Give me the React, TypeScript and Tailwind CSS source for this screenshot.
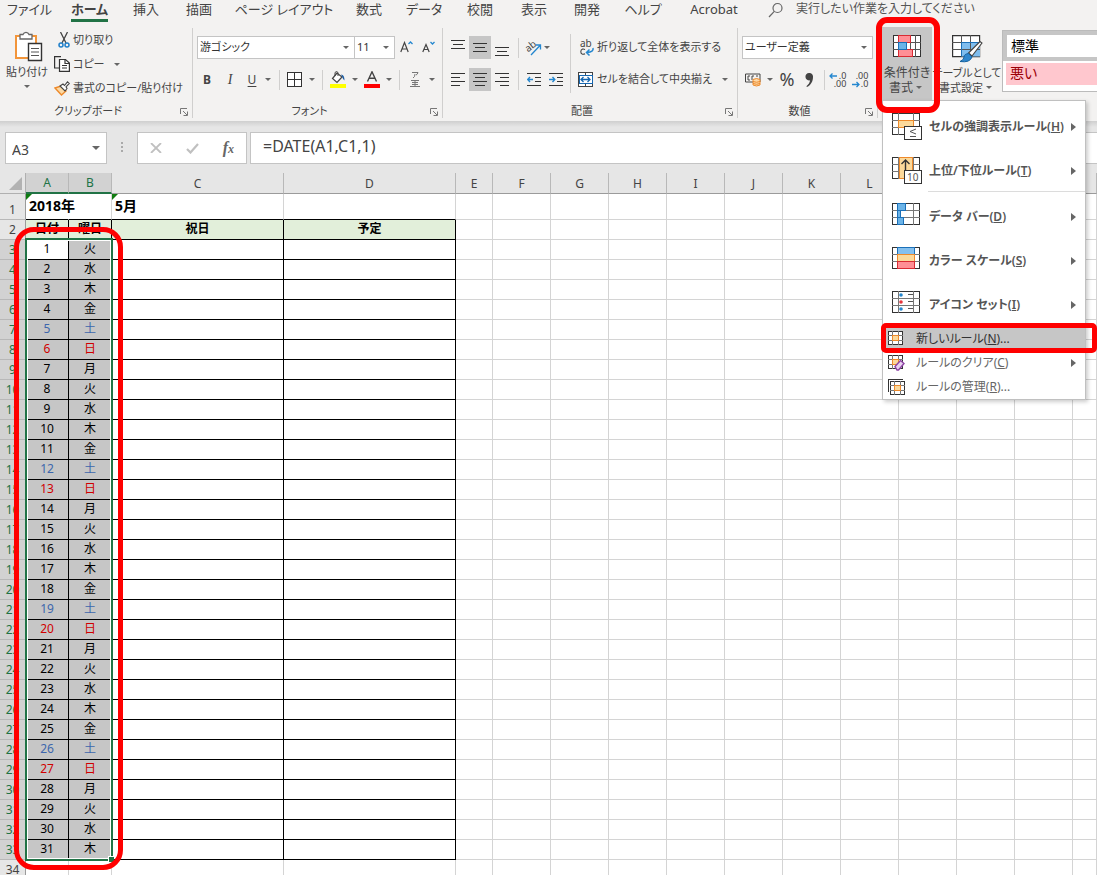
import React from "react";

const UI = "font-['Noto_Sans','Noto_Sans_CJK_JP',sans-serif] [font-feature-settings:'palt']";

/* ---------- small shared pieces ---------- */

function Caret({ className = "w-3" }: { className?: string }) {
  return (
    <span className={`flex shrink-0 items-center justify-center ${className}`}>
      <svg width="6" height="3" viewBox="0 0 6 3" fill="#666"><path d="M0 0h6L3 3z" /></svg>
    </span>
  );
}

function Sep({ className = "w-2" }: { className?: string }) {
  return (
    <span className={`flex h-5 shrink-0 justify-center ${className}`}>
      <span className="w-px bg-[#d0cfce]" />
    </span>
  );
}

function Tool({ label, className = "w-[22px]", pressed, children }: { label: string; className?: string; pressed?: boolean; children: React.ReactNode }) {
  return (
    <button aria-label={label} aria-pressed={pressed} className={`flex h-[23px] shrink-0 items-center justify-center ${pressed ? "bg-[#c6c6c6]" : ""} ${className}`}>
      {children}
    </button>
  );
}

function Group({ title, className, launcher, children }: { title: string; className: string; launcher?: boolean; children: React.ReactNode }) {
  return (
    <section aria-label={title} className={`flex shrink-0 flex-col pt-1.5 ${className}`}>
      <div className="flex h-[90px] flex-col border-r border-[#d0cfce]">
        <div className="h-[75px]">{children}</div>
        <div className="flex h-[15px] items-end pr-1">
          <span className="flex-1 pr-3 text-center text-[11px] leading-[14px]">{title}</span>
          {launcher && (
            <button aria-label={`${title}の設定`} className="-ml-2 pb-0.5">
              <svg width="8" height="8" viewBox="0 0 8 8" fill="none" stroke="#777"><path d="M.5 6V.5H7M3 3l4 4M7.5 3.500v4h-4" /></svg>
            </button>
          )}
        </div>
      </div>
    </section>
  );
}

function Drop({ label, value, className }: { label: string; value: string; className: string }) {
  return (
    <label className={`relative flex h-[23px] items-center border border-[#c4c4c4] bg-white ${className}`}>
      <select aria-label={label} className="h-full w-full appearance-none bg-transparent pl-0.5 text-[#333] outline-none">
        <option>{value}</option>
      </select>
      <span className="pointer-events-none absolute right-1"><Caret className="w-2" /></span>
    </label>
  );
}

function Lines({ rows }: { rows: [number, number, number][] }) {
  return (
    <svg width="14" height="16" viewBox="0 0 14 16" stroke="#333" shapeRendering="crispEdges">
      {rows.map(([x1, x2, y]) => <path key={y} d={`M${x1} ${y + 0.5}H${x2}`} />)}
    </svg>
  );
}

/* ---------- ribbon icons ---------- */

const PasteIcon = () => (
  <svg width="28" height="31" viewBox="0 0 28 31" fill="none">
    <path d="M1 5h20v22H1z" fill="#fff" stroke="#f2953a" strokeWidth="2" />
    <path d="M5 3.500h3a3.200 3.200 0 0 1 6 0h3V8H5z" fill="#fff" stroke="#666" strokeWidth="1.300" />
    <path d="M13.500 12.500h13v17h-13z" fill="#fff" stroke="#333" strokeWidth="1.400" />
    <path d="M16 17.500h8M16 21h8M16 24.500h8" stroke="#555" />
  </svg>
);
const CutIcon = () => (
  <svg width="12" height="16" viewBox="0 0 12 16" fill="none">
    <path d="M2.500 0l5.500 11M9.500 0L4 11" stroke="#444" strokeWidth="1.300" />
    <circle cx="3" cy="13" r="2" stroke="#1f7fc9" strokeWidth="1.500" /><circle cx="9" cy="13" r="2" stroke="#1f7fc9" strokeWidth="1.500" />
  </svg>
);
const CopyIcon = () => (
  <svg width="16" height="16" viewBox="0 0 16 16" fill="none" stroke="#333" strokeWidth="1.200">
    <path d="M5 12H.6V.6H7" /><path d="M5.500 3.500h6L15.400 7v8.400H5.500z" fill="#fff" /><path d="M11 3.500V7.500h4M8 9.500h5M8 12h5" />
  </svg>
);
const BrushIcon = () => (
  <svg width="16" height="15" viewBox="0 0 16 15" fill="none">
    <path d="M1 7l6-2 5 5-4.500 4z" fill="#fbd9a5" stroke="#ee8a2b" strokeWidth="1.400" />
    <path d="M6 5l3-2 1.500 1.500L13.500.8 15.300 2.500 12 5.800 13 7.500l-2 2.500z" fill="#fff" stroke="#444" strokeWidth="1.100" />
  </svg>
);
const FillIcon = () => (
  <svg width="16" height="17" viewBox="0 0 16 17" fill="none">
    <path d="M7 2L2.500 7.500 7 11.500l5-5.500z" fill="#fff" stroke="#444" strokeWidth="1.200" /><path d="M5 5V1.500q1.500-2 3 0V5" stroke="#444" />
    <path d="M11 3.500q3.500 0 3.500 6-2-2-2.500-4z" fill="#1f5fa5" /><path d="M0 13h16v4H0z" fill="#ff0" />
  </svg>
);
const FontColorIcon = () => (
  <svg width="16" height="17" viewBox="0 0 16 17" fill="none">
    <path d="M3.500 10.500L8 .8l4.500 9.700M5.200 7.300h5.600" stroke="#444" strokeWidth="1.400" /><path d="M0 13h16v4H0z" fill="red" />
  </svg>
);
const RubyIcon = () => (
  <svg width="10" height="17" viewBox="0 0 10 17" fill="none" stroke="#777">
    <path d="M2 1.500h6q-.5 2-2 2.500M5 3q0 3-2 4M1 9.500h8M2 11.500h6M2 13.500h6M0 15.500h10M5 9v6" />
  </svg>
);
const OrientationIcon = () => (
  <svg width="17" height="16" viewBox="0 0 17 16" fill="none" className="overflow-visible">
    <text x="0" y="10" transform="rotate(-38 5 7)" fontSize="10" fill="#444" fontFamily="Noto Sans">ab</text>
    <path d="M6 15L15.500 5M11 5h4.500v4.500" stroke="#2487cf" strokeWidth="1.300" />
  </svg>
);
const Indent = ({ out }: { out?: boolean }) => (
  <svg width="14" height="14" viewBox="0 0 14 14" fill="none">
    <path d="M0 .5h14M8 4.500h6M8 8.500h6M0 12.500h14" stroke="#333" shapeRendering="crispEdges" />
    <path d={out ? "M6 6.500H1M3 4L.7 6.500 3 9" : "M0 6.500h5M3.500 4l2.300 2.500L3.500 9"} stroke="#2487cf" strokeWidth="1.400" />
  </svg>
);
const WrapIcon = () => (
  <svg width="15" height="17" viewBox="0 0 15 17" fill="none" className="overflow-visible">
    <text x="0" y="8" fontSize="10" fill="#444" fontFamily="Noto Sans">ab</text>
    <path d="M5 10.600q-1.200-.8-2.500-.5Q.8 10.700.8 12.700t1.700 2.500q1.300.2 2.500-.5" stroke="#444" strokeWidth="1.100" />
    <path d="M13 9q1 4-6 4.500M9.500 10.500L6.500 13.500l3 3" stroke="#2487cf" strokeWidth="1.500" />
  </svg>
);
const MergeIcon = () => (
  <svg width="15" height="15" viewBox="0 0 15 15" fill="none" shapeRendering="crispEdges">
    <path d="M.5.5h14v14H.5zM7.500 0v3M7.500 12v3" stroke="#444" fill="#fff" />
    <path d="M1 3.500h13v8H1z" stroke="#1566b0" fill="#fff" />
    <path d="M3 7.500h9M5.500 5L3 7.500 5.500 10M9.500 5L12 7.500 9.500 10" stroke="#1566b0" strokeWidth="1.300" shapeRendering="auto" />
  </svg>
);
const MoneyIcon = () => (
  <svg width="16" height="14" viewBox="0 0 16 14" fill="none">
    <path d="M.5 1h14.500v8H.5z" stroke="#444" /><path d="M5 3H3v4h2M7 7V3h2M11 3h2" stroke="#444" />
    <path d="M8 6.500q3.500-2 7 0V12q-3.500 2-7 0z" fill="#fdd9a8" stroke="#ee8a2b" /><path d="M8 8.500q3.500 1.500 7 0M8 10.500q3.500 1.500 7 0" stroke="#ee8a2b" />
  </svg>
);
const Decimals = ({ more }: { more?: boolean }) => (
  <span className="relative flex flex-col items-end text-[9px] leading-2">
    <span>{more ? ".0" : ".00"}</span>
    <span>{more ? ".00" : ".0"}</span>
    <svg width="16" height="16" viewBox="0 0 16 16" fill="none" className="absolute right-0 top-0 overflow-visible">
      <path d={more ? "M7 4H0M2.500 1.500L0 4l2.500 2.500" : "M0 12.500h7M4.500 10L7 12.500 4.500 15"} stroke="#2487cf" strokeWidth="1.300" />
    </svg>
  </span>
);
const CondIcon = () => (
  <svg width="28" height="22" viewBox="0 0 28 22" fill="none" shapeRendering="crispEdges">
    <path d="M.5.5h27v21H.5z" fill="#fff" stroke="#333" />
    <path d="M0 7.500h28M0 14.500h28M5.500 0v22M22.500 0v22M17.500 0v22" stroke="#555" />
    <path d="M5.500.5h12v7h-12zM5.500 14.500h14v7h-14z" fill="#ff8f95" stroke="#d92b33" />
    <path d="M5.500 7.500h8v7h-8z" fill="#6cb4e8" stroke="#1b70b8" />
  </svg>
);
const TableIcon = () => (
  <svg width="31" height="28" viewBox="0 0 31 28" fill="none">
    <path d="M.6.6h27v21H.6z" fill="#fff" stroke="#333" strokeWidth="1.200" />
    <path d="M9 7.500h19v14H9z" fill="#7fbdee" />
    <path d="M0 7.500h28M0 14.500h28M9.500 0v22M18.500 0v22" stroke="#555" />
    <path d="M9.500 21.500v-14h18" stroke="#1b70b8" />
    <path d="M30 8L20 21l-3.500-3L28 6.500z" fill="#fff" stroke="#444" strokeWidth="1.200" />
    <path d="M16.500 18.500L20 22q-2 6-12 4.500 4-1.500 4-4.500t4.500-3.500z" fill="#2f86cc" stroke="#14619f" />
  </svg>
);

/* ---------- menu icons ---------- */

function Sheet({ children }: { children: React.ReactNode }) {
  return (
    <svg width="30" height="28" viewBox="0 0 30 28" fill="none" shapeRendering="crispEdges">
      <path d="M.5.5h27v21H.5z" fill="#fff" stroke="#333" />
      <path d="M0 7.500h28M0 14.500h28M6.500 0v22M21.500 0v22" stroke="#777" />
      {children}
    </svg>
  );
}
const HighlightIcon = () => (
  <Sheet>
    <path d="M6.500 7.500h15v7h-15z" fill="#fcd99a" stroke="#ee8a2b" />
    <path d="M12.500 13.500h17v13h-17z" fill="#fff" stroke="#333" />
    <path d="M24 16l-6 2.500 6 2.500M18 23.500h6" stroke="#555" shapeRendering="auto" />
  </Sheet>
);
const TopIcon = () => (
  <Sheet>
    <path d="M7.500.5h13v21h-13z" fill="#fcd99a" stroke="#ee8a2b" />
    <path d="M13.500 14V3M9.500 7l4-4 4 4" stroke="#333" strokeWidth="1.400" shapeRendering="auto" />
    <path d="M12.500 13.500h17v13h-17z" fill="#fff" stroke="#333" />
    <text x="15" y="24" fontSize="10" fill="#555" fontFamily="Noto Sans" fontWeight="400">10</text>
  </Sheet>
);
const BarIcon = () => (
  <Sheet>
    <path d="M5.500.5h8v7h-8zM5.500 14.500h6v7h-6zM5.500 7.500h3v7h-3z" fill="#6cb4e8" stroke="#1b70b8" />
  </Sheet>
);
const ScaleIcon = () => (
  <Sheet>
    <path d="M5.500.5h17v7h-17z" fill="#85c0ee" stroke="#1b70b8" />
    <path d="M5.500 7.500h17v7h-17z" fill="#fcd99a" stroke="#ee8a2b" />
    <path d="M5.500 14.500h17v7h-17z" fill="#ff8f95" stroke="#d92b33" />
  </Sheet>
);
const SetIcon = () => (
  <Sheet>
    <path d="M16 3.500h5M16 10.500h5M16 17.500h5" stroke="#555" />
    <g shapeRendering="auto"><circle cx="9" cy="4" r="1.800" fill="#2487cf" /><circle cx="9" cy="11" r="1.800" fill="#e8363d" /><circle cx="9" cy="18" r="1.800" fill="#2487cf" /></g>
  </Sheet>
);
function SmallSheet({ kind }: { kind: "new" | "clear" | "manage" }) {
  const o = kind === "manage" ? 2 : 0;
  return (
    <svg width="17" height="16" viewBox="0 0 17 16" fill="none" shapeRendering="crispEdges">
      {kind === "manage" && <path d="M.5 13V.5H15" stroke="#333" />}
      <g transform={`translate(${o} ${o})`}>
        <path d="M.5.5h14v13H.5z" fill="#fff" stroke="#333" />
        <path d="M0 4.500h15M0 9.500h15M4.500 0v14M10.500 0v14" stroke="#777" />
        <path d="M4.500 4.500h6v5h-6z" fill="#fcd99a" stroke="#ee8a2b" />
      </g>
      {kind === "clear" && <path d="M7 11.500l5.500-6 3.500 3-5.500 6.500H9z" fill="#e9d3f0" stroke="#8e44a5" strokeWidth="1.400" shapeRendering="auto" />}
    </svg>
  );
}

const BIG_ITEMS = [
  { icon: <HighlightIcon />, text: "セルの強調表示ルール", k: "H" },
  { icon: <TopIcon />, text: "上位/下位ルール", k: "T" },
  { icon: <BarIcon />, text: "データ バー", k: "D" },
  { icon: <ScaleIcon />, text: "カラー スケール", k: "S" },
  { icon: <SetIcon />, text: "アイコン セット", k: "I" },
];
const SMALL_ITEMS = [
  { kind: "new", text: "新しいルール", k: "N", tail: "...", sub: false },
  { kind: "clear", text: "ルールのクリア", k: "C", tail: "", sub: true },
  { kind: "manage", text: "ルールの管理", k: "R", tail: "...", sub: false },
] as const;

const SubArrow = () => <svg width="5" height="8" viewBox="0 0 5 8" fill="#666" className="shrink-0"><path d="M0 0l5 4-5 4z" /></svg>;

function CondMenu() {
  return (
    <div role="menu" className="absolute left-0 top-[73px] z-20 w-[204px] border border-[#c0c0c0] bg-white pt-1 shadow-[2px_2px_4px_rgba(0,0,0,0.2)]">
      {BIG_ITEMS.map((it, i) => (
        <div key={it.k} className={i === 1 ? "relative pb-0.5" : ""}>
          <button role="menuitem" className="flex h-11 w-full items-center pl-[9px] pr-[9px] text-left text-[12px] font-semibold text-[#555]">
            <span className="h-7 w-[37px] shrink-0">{it.icon}</span>
            <span className="flex-1 whitespace-nowrap">{it.text}(<u>{it.k}</u>)</span>
            <SubArrow />
          </button>
          {i === 1 && <hr className="absolute bottom-[3px] left-[45px] right-0 border-[#dcdcdc]" />}
        </div>
      ))}
      {SMALL_ITEMS.map((it) => (
        <div key={it.k} className="relative">
          <button role="menuitem" className={`flex h-6 w-full items-center pl-[5px] pr-[9px] text-left text-[12px] ${it.kind === "new" ? "bg-[#c6c6c6] text-[#333]" : "text-[#666]"}`}>
            <span className="w-7 shrink-0"><SmallSheet kind={it.kind} /></span>
            <span className="flex-1 whitespace-nowrap">{it.text}(<u>{it.k}</u>){it.tail}</span>
            {it.sub && <SubArrow />}
          </button>
          {it.kind === "new" && <div className="pointer-events-none absolute -left-0.5 -right-3 -top-1 h-[30px] rounded-[5px] border-5 border-[#f00]" />}
        </div>
      ))}
    </div>
  );
}

/* ---------- ribbon ---------- */

const TABS: [string, string][] = [
  ["ファイル", "w-[59px]"], ["ホーム", "w-[61px]"], ["挿入", "w-[52px]"], ["描画", "w-[54px]"], ["ページ レイアウト", "w-[116px]"], ["数式", "w-[54px]"],
  ["データ", "w-14"], ["校閲", "w-14"], ["表示", "w-[52px]"], ["開発", "w-[54px]"], ["ヘルプ", "w-[58px]"], ["Acrobat", "w-[84px]"],
];

function Tabs() {
  return (
    <nav className="flex h-[22px] items-start text-[13px] leading-[18px]">
      {TABS.map(([t, w]) => (
        <button key={t} className={`flex shrink-0 justify-center whitespace-nowrap ${w}`}>
          <span className={t === "ホーム" ? "h-[22px] border-b-3 border-[#217346] font-bold" : ""}>{t}</span>
        </button>
      ))}
      <label className="flex flex-1 items-center pl-3">
        <svg width="16" height="16" viewBox="0 0 16 16" fill="none" stroke="#666" strokeWidth="1.200" className="mt-0.5"><circle cx="9.500" cy="6" r="4.500" /><path d="M6.300 9.300L1 15" /></svg>
        <input aria-label="操作アシスト" placeholder="実行したい作業を入力してください" className="ml-3 h-[18px] flex-1 bg-transparent text-[12px] outline-none placeholder:text-[#555]" />
      </label>
    </nav>
  );
}

function Ribbon() {
  return (
    <div className="flex h-[99px] text-[11px]">
      <Group title="クリップボード" className="w-[193px]" launcher>
        <div className="flex">
          <button className="flex w-[54px] shrink-0 flex-col items-center pt-[3px]">
            <span className="pl-1"><PasteIcon /></span>
            <span className="whitespace-nowrap leading-5">貼り付け</span>
            <Caret className="h-2 w-3" />
          </button>
          <div className="flex flex-col">
            <button className="flex h-6 items-center"><span className="flex w-[19px] justify-center"><CutIcon /></span>切り取り</button>
            <button className="flex h-6 items-center"><span className="w-[19px]"><CopyIcon /></span>コピー<Caret className="ml-1 w-4" /></button>
            <button className="flex h-6 items-center whitespace-nowrap"><span className="w-[19px]"><BrushIcon /></span>書式のコピー/貼り付け</button>
          </div>
        </div>
      </Group>

      <Group title="フォント" className="w-[250px]" launcher>
        <div className="flex flex-col gap-[9px] pl-1 pt-2">
          <div className="flex">
            <Drop label="フォント" value="游ゴシック" className="w-[158px]" />
            <Drop label="フォント サイズ" value="11" className="-ml-px w-[41px]" />
            <Tool label="フォント サイズの拡大">
              <svg width="13" height="14" viewBox="0 0 13 14" fill="none"><path d="M.8 11L4.500 1.500 8.200 11M2 8h5" stroke="#444" strokeWidth="1.200" /><path d="M8.500 3L10.500 1l2 2" stroke="#2487cf" strokeWidth="1.300" /></svg>
            </Tool>
            <Tool label="フォント サイズの縮小">
              <svg width="13" height="14" viewBox="0 0 13 14" fill="none"><path d="M.8 11L4 3.500 7.200 11M2 8.500h4" stroke="#444" strokeWidth="1.200" /><path d="M8.500 1l2 2 2-2" stroke="#2487cf" strokeWidth="1.300" /></svg>
            </Tool>
          </div>
          <div className="flex h-[23px] items-center text-[12px]">
            <Tool label="太字" className="w-5"><b>B</b></Tool>
            <Tool label="斜体" className="w-[26px]"><i className="font-['Liberation_Serif',serif] text-[14px]">I</i></Tool>
            <Tool label="下線" className="w-[18px]"><u className="underline-offset-2">U</u></Tool>
            <Caret className="w-3.5" /><Sep />
            <Tool label="罫線">
              <svg width="15" height="15" viewBox="0 0 15 15" fill="#fff" stroke="#333" shapeRendering="crispEdges"><path d="M.5.5h14v14H.5zM7.500 0v15M0 7.500h15" /></svg>
            </Tool>
            <Caret className="w-3.5" /><Sep className="w-1.5" />
            <Tool label="塗りつぶしの色" className="w-[26px]"><FillIcon /></Tool><Caret className="w-2" />
            <Tool label="フォントの色" className="w-[26px]"><FontColorIcon /></Tool><Caret className="w-2" />
            <Sep className="w-3" />
            <Tool label="ふりがな" className="w-5"><RubyIcon /></Tool><Caret className="w-3.5" />
          </div>
        </div>
      </Group>

      <Group title="配置" className="w-[295px]" launcher>
        <div className="flex">
          <div className="flex w-[127px] shrink-0 flex-col gap-[9px] pl-1 pt-2">
            <div className="flex h-[23px] items-center">
              <Tool label="上揃え"><Lines rows={[[0, 14, 0], [2, 12, 4], [0, 14, 8]]} /></Tool>
              <Tool label="上下中央揃え" pressed><Lines rows={[[0, 14, 3], [2, 12, 7], [0, 14, 11]]} /></Tool>
              <Tool label="下揃え"><Lines rows={[[0, 14, 7], [2, 12, 11], [0, 14, 15]]} /></Tool>
              <Sep className="w-2.5" />
              <Tool label="方向" className="w-5"><OrientationIcon /></Tool><Caret className="w-2" />
            </div>
            <div className="flex h-[23px] items-center">
              <Tool label="左揃え"><Lines rows={[[0, 14, 1], [0, 9, 5], [0, 14, 9], [0, 9, 13]]} /></Tool>
              <Tool label="中央揃え" pressed><Lines rows={[[0, 14, 1], [2, 12, 5], [0, 14, 9], [2, 12, 13]]} /></Tool>
              <Tool label="右揃え"><Lines rows={[[0, 14, 1], [5, 14, 5], [0, 14, 9], [5, 14, 13]]} /></Tool>
              <Sep className="w-2.5" />
              <Tool label="インデントを減らす"><Indent out /></Tool>
              <Tool label="インデントを増やす"><Indent /></Tool>
            </div>
          </div>
          <div className="mt-1.5 h-[59px] w-px bg-[#d0cfce]" />
          <div className="flex flex-1 flex-col gap-[9px] pl-[7px] pt-2">
            <button className="flex h-[23px] items-center whitespace-nowrap"><span className="w-[19px] pl-0.5"><WrapIcon /></span>折り返して全体を表示する</button>
            <button className="flex h-[23px] items-center whitespace-nowrap"><span className="w-[19px]"><MergeIcon /></span>セルを結合して中央揃え<Caret className="ml-auto mr-2 w-2" /></button>
          </div>
        </div>
      </Group>

      <Group title="数値" className="w-[140px]" launcher>
        <div className="flex flex-col gap-[9px] pl-1 pt-2">
          <Drop label="表示形式" value="ユーザー定義" className="w-[131px]" />
          <div className="flex h-[23px] items-center">
            <Tool label="通貨表示形式"><MoneyIcon /></Tool><Caret className="w-3" />
            <Tool label="パーセント スタイル"><span className="text-[18px]">%</span></Tool>
            <Tool label="桁区切りスタイル">
              <svg width="8" height="14" viewBox="0 0 8 14" fill="#444"><path d="M4 0a3.700 3.700 0 0 1 4 4c0 4-2 8-6 10l-.6-.8C3.500 11.500 5 9.500 5 7.300A3.700 3.700 0 1 1 4 0z" /></svg>
            </Tool>
            <Sep />
            <Tool label="小数点以下の表示桁数を増やす" className="w-6"><Decimals more /></Tool>
            <Tool label="小数点以下の表示桁数を減らす" className="w-5"><Decimals /></Tool>
          </div>
        </div>
      </Group>

      <section aria-label="スタイル" className="flex min-w-0 flex-1 pl-1 pt-[5px]">
        <div className="relative h-[73px] w-[50px] shrink-0">
          <button aria-expanded="true" className="flex h-[73px] w-full flex-col items-center bg-[#c6c6c6] pt-2 text-[12px] leading-[15px]">
            <CondIcon />
            <span className="whitespace-nowrap pt-2">条件付き</span>
            <span className="flex">書式<Caret className="w-3" /></span>
          </button>
          <CondMenu />
          <div className="pointer-events-none absolute -left-1.5 -top-2.5 z-30 h-24 w-16 rounded-[11px] border-6 border-[#f00]" />
        </div>
        <button className="flex w-[70px] shrink-0 flex-col items-center pt-2 leading-[15px]">
          <TableIcon />
          <span className="whitespace-nowrap pt-0.5">テーブルとして</span>
          <span className="flex">書式設定<Caret className="w-3" /></span>
        </button>
        <div className="mt-[3px] h-[62px] min-w-0 flex-1 overflow-hidden border border-r-0 border-[#bbb] bg-white text-[14px]">
          <button className="flex h-[30px] w-full items-center border-4 border-r-0 border-[#c6c6c6] pb-0.5 pl-1 text-black">標準</button>
          <button className="ml-[3px] mt-0.5 flex h-[22px] w-full items-center bg-[#ffc7ce] pb-1 pl-1 text-[#9c0006]">悪い</button>
        </div>
      </section>
    </div>
  );
}

function FormulaBar() {
  return (
    <div className="flex h-[52px] bg-[linear-gradient(#cfcfcf,#e6e6e6_6px)] pl-[5px] pt-[11px]">
      <label className="flex h-8 w-[102px] shrink-0 items-center border border-[#c4c4c4] bg-white pr-1.5">
        <input aria-label="名前ボックス" defaultValue="A3" className="w-full min-w-0 bg-transparent pl-1.5 pt-0.5 text-[14px] text-[#444] outline-none" />
        <svg width="8" height="4" viewBox="0 0 8 4" fill="#666" className="shrink-0"><path d="M0 0h8L4 4z" /></svg>
      </label>
      <svg width="30" height="32" viewBox="0 0 30 32" fill="#aaa" className="shrink-0"><path d="M14 10h2v2h-2zM14 14h2v2h-2zM14 18h2v2h-2z" /></svg>
      <div className="flex h-8 w-[110px] shrink-0 items-center justify-around border border-[#c4c4c4] bg-white">
        <button aria-label="キャンセル"><svg width="12" height="10" viewBox="0 0 12 10" stroke="#c0c0c0" strokeWidth="1.800"><path d="M1 0l10 10M11 0L1 10" /></svg></button>
        <button aria-label="入力"><svg width="13" height="11" viewBox="0 0 13 11" fill="none" stroke="#c0c0c0" strokeWidth="2.200"><path d="M1 6l3.500 3.500L12 1" /></svg></button>
        <button aria-label="関数の挿入" className="font-['Liberation_Serif',serif] text-[16px] font-bold italic leading-4 text-[#666]">f<span className="text-[12px]">x</span></button>
      </div>
      <input aria-label="数式バー" defaultValue="=DATE(A1,C1,1)" className="ml-[3px] h-8 min-w-0 flex-1 border border-r-0 border-[#c4c4c4] bg-white pb-1 pl-3 text-[16px] text-[#444] outline-none" />
    </div>
  );
}

/* ---------- worksheet ---------- */

const COLS = ["A", "B", "C", "D", "E", "F", "G", "H", "I", "J", "K", "L", "M", "N", "O", ""];
const DAYS = ["火", "水", "木", "金", "土", "日", "月"];
const COL_W = ["w-[43px]", "w-[43px]", "w-[172px]", "w-[172px]", "w-[37px]"];

function cellContent(row: number, col: number): string {
  if (row === 1) return col === 0 ? "2018年" : col === 2 ? "5月" : "";
  if (row === 2) return ["日付", "曜日", "祝日", "予定"][col] ?? "";
  if (row <= 33 && col === 0) return String(row - 2);
  if (row <= 33 && col === 1) return DAYS[(row - 3) % 7];
  return "";
}

function cellClass(row: number, col: number): string {
  const planner = col < 4 && row >= 2 && row <= 33;
  const right = planner ? "border-r-black" : row === 1 && col === 0 ? "border-r-transparent" : "border-r-[#d4d4d4]";
  const bottom = planner || (row === 1 && col < 4) ? "border-b-black" : "border-b-[#d4d4d4]";
  let look = "text-black";
  if (row === 1) look = "relative whitespace-nowrap pl-[3px] text-left text-[14px] font-bold text-black";
  else if (row === 2) look = col < 4 ? "bg-[#e2efda] text-center font-bold text-black" : "";
  else if (col < 2 && row <= 33) {
    const wd = (row - 3) % 7;
    const ink = wd === 4 ? "text-[#3d66ad]" : wd === 5 ? "text-[#d00000]" : "text-black";
    const bg = row === 3 && col === 0 ? "bg-white" : "bg-[#c6c6c6]";
    look = `text-center ${ink} ${bg}`;
  }
  return `border-b border-r px-0 pb-0.5 pt-0 ${right} ${bottom} ${look}`;
}

function Worksheet() {
  const rows = Array.from({ length: 34 }, (_, i) => i + 1);
  return (
    <div className="relative min-h-0 flex-1 overflow-hidden bg-white">
      <table className="w-full table-fixed border-separate border-spacing-0 text-[12px] leading-[17px]">
        <colgroup>
          <col className="w-[26px]" />
          {COLS.map((c, i) => <col key={i} className={c === "" ? "" : COL_W[i] ?? "w-[58px]"} />)}
        </colgroup>
        <thead>
          <tr className="h-[21px] bg-[#e6e6e6]">
            <td className="border-b border-r border-[#b0b0b0] p-0">
              <svg width="13" height="13" viewBox="0 0 13 13" fill="#b2b2b2" className="ml-auto mr-[3px]"><path d="M13 0v13H0z" /></svg>
            </td>
            {COLS.map((c, i) => (
              <th key={i} scope="col" className={`border-r border-r-[#b8b8b8] p-0 font-normal ${i < 2 ? "border-b-2 border-b-[#217346] bg-[#d2d2d2] text-[#217346]" : "border-b border-b-[#9b9b9b] text-[#444]"}`}>{c}</th>
            ))}
          </tr>
        </thead>
        <tbody>
          {rows.map((r) => (
            <tr key={r} className={r === 1 ? "h-[26px]" : "h-5"}>
              <th scope="row" className={`border-b border-r border-b-[#b8b8b8] border-r-[#9b9b9b] p-0 font-normal ${r === 1 ? "pt-1.5" : ""} ${r > 2 && r < 34 ? "bg-[#d2d2d2] text-[#217346]" : "bg-[#e6e6e6] text-[#444]"}`}>{r}</th>
              {COLS.map((_, c) => (
                <td key={c} className={cellClass(r, c)}>
                  {cellContent(r, c)}
                  {r === 1 && (c === 0 || c === 2) && <svg width="6" height="6" viewBox="0 0 6 6" fill="#107c10" className="absolute left-0 top-0"><path d="M0 0h6L0 6z" /></svg>}
                </td>
              ))}
            </tr>
          ))}
        </tbody>
      </table>
      <div className="pointer-events-none absolute left-[25px] top-[65px] h-[623px] w-[88px] border-2 border-[#217346]">
        <div className="h-full border border-white" />
        <div className="absolute -bottom-[3px] -right-[3px] h-1.5 w-1.5 border-l border-t border-white bg-[#217346]" />
      </div>
      <div className="pointer-events-none absolute left-3.5 top-[54px] h-[643px] w-[109px] rounded-[20px] border-5 border-[#f00]" />
    </div>
  );
}

export default function App() {
  return (
    <div className={`flex h-screen flex-col overflow-hidden bg-[#f3f2f1] text-[#444] ${UI}`}>
      <Tabs />
      <Ribbon />
      <FormulaBar />
      <Worksheet />
    </div>
  );
}
